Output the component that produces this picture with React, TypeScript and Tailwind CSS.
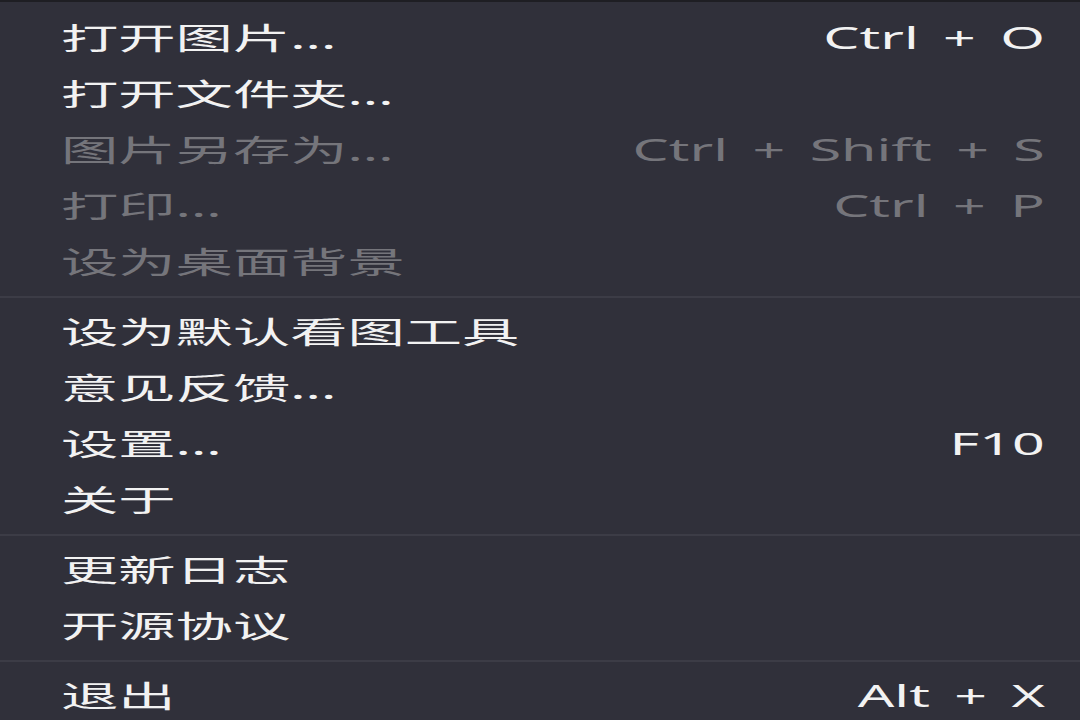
type MenuItem = {
  label: string;
  shortcut?: string;
  disabled?: boolean;
};

const groups: MenuItem[][] = [
  [
    { label: "打开图片...", shortcut: "Ctrl + O" },
    { label: "打开文件夹..." },
    { label: "图片另存为...", shortcut: "Ctrl + Shift + S", disabled: true },
    { label: "打印...", shortcut: "Ctrl + P", disabled: true },
    { label: "设为桌面背景", disabled: true },
  ],
  [
    { label: "设为默认看图工具" },
    { label: "意见反馈..." },
    { label: "设置...", shortcut: "F10" },
    { label: "关于" },
  ],
  [{ label: "更新日志" }, { label: "开源协议" }],
  [{ label: "退出", shortcut: "Alt + X" }],
];

function Row({ item }: { item: MenuItem }) {
  return (
    <div
      className={
        "flex h-[56px] items-center justify-between pl-[61px] pr-[35px] " +
        (item.disabled ? "text-[#75757b]" : "text-[#f2f2f2]")
      }
    >
      <span className="origin-left scale-x-[1.91] whitespace-pre">{item.label}</span>
      {item.shortcut && (
        <span className="origin-right scale-x-[1.91] whitespace-pre [word-spacing:5px]">
          {item.shortcut}
        </span>
      )}
    </div>
  );
}

export default function App() {
  return (
    <div
      className="h-[720px] w-[1080px] overflow-hidden border-t-2 border-[#1e1e23] bg-[#30303a] pt-[8px] text-[30px] leading-none"
      style={{ fontFamily: '"Noto Sans", "Noto Sans CJK SC", sans-serif' }}
    >
      {groups.map((group, i) => (
        <div key={i}>
          {i > 0 && <div className="my-[6px] h-[2px] bg-[#3c3c46]" />}
          {group.map((item) => (
            <Row key={item.label} item={item} />
          ))}
        </div>
      ))}
    </div>
  );
}
